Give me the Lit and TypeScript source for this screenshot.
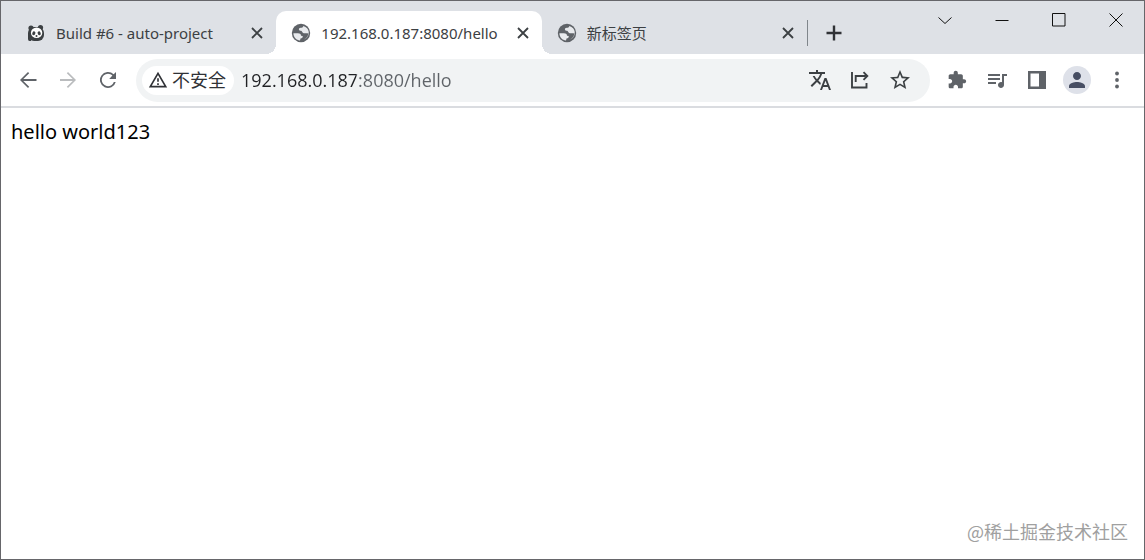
import { LitElement, html, css, svg } from "lit";
import { customElement } from "lit/decorators.js";
import { classMap } from "lit/directives/class-map.js";

const icon = (body: unknown, size = 24, box = 24) => html`<svg
  width=${size}
  height=${size}
  viewBox="0 0 ${box} ${box}"
  fill="currentColor"
  aria-hidden="true"
>${body}</svg>`;

const globe = icon(svg`<circle cx="10" cy="10" r="9.2" fill="#5f6368"/>
  <path fill="#e8eaed" d="M2.400 10.200h4.400c2.600 0 3.200 1 3.200 2.600l1.700.3c.3 1.500-.6 2.400-2.200 2.500l-.5 1.800C5.300 17.200 2.500 14.200 2.400 10.200z"/>
  <path fill="#e8eaed" d="M12.400 2.900c-.4 1.400-1.200 1.700-2.600 1.900-1.300.2-2 .7-1.900 1.600.1 1 1 1.200 2.200 1.300 1.200.2 1.100 2.300 2.600 2.500 1.700.2 2.800-.3 4.700.4-.4 3-2.100 5-4.600 6 5-1.500 6.500-7.600 3.300-11.300-1-1.200-2.200-2-3.700-2.400z"/>`, 20, 20);

const panda = icon(svg`<circle cx="4" cy="4" r="2.600"/><circle cx="13.500" cy="3.600" r="2.600"/>
  <rect x="1" y="3" width="16" height="14" rx="6"/>
  <path d="M1 9h3v8H2.500Q1 17 1 15z"/>
  <ellipse cx="9.600" cy="8.800" rx="5.700" ry="5.300" fill="#fff"/>
  <ellipse cx="6.800" cy="9.300" rx="1.500" ry="2" transform="rotate(25 6.800 9.300)"/>
  <ellipse cx="12.200" cy="9.300" rx="1.500" ry="2" transform="rotate(-25 12.200 9.300)"/>
  <circle cx="9.500" cy="12" r="1"/>`, 18, 18);

const cross = icon(svg`<path d="M1 1l10 10M11 1l-10 10" stroke="currentColor" stroke-width="1.800" fill="none"/>`, 12, 12);
const plus = icon(svg`<path d="M8 .5v15M.5 8h15" stroke="currentColor" stroke-width="2.400" fill="none"/>`, 16, 16);

const glyph = (d: string, size = 24) => icon(svg`<path d=${d}/>`, size);
const back = glyph("M20.500 11.100H7.300l5.900-5.900L12 4l-8 8 8 8 1.200-1.200-5.900-5.900h13.200z");
const forward = glyph("M4 11.100h12.700l-5.900-5.900L12 4l8 8-8 8-1.200-1.200 5.900-5.900H4z");
const reload = glyph("M17.650 6.350A8 8 0 1 0 19.730 14h-1.900A6.200 6.200 0 1 1 12 5.800c1.700 0 3.200.7 4.400 1.800L13.200 11H20V4z");
const warning = glyph("M12 2 1 21h22zm0 4 7.530 13H4.470zm-1 4v4h2v-4zm0 6v2h2v-2z", 20);
const translate = glyph("M12.870 15.070l-2.540-2.510.03-.03c1.740-1.940 2.980-4.170 3.710-6.530H17V4h-7V2H8v2H1v1.990h11.170C11.500 7.920 10.440 9.750 9 11.350 8.070 10.320 7.300 9.190 6.690 8h-2c.73 1.630 1.730 3.170 2.980 4.560l-5.090 5.020L4 19l5-5 3.110 3.110.76-2.040zM18.500 10h-2L12 22h2l1.120-3h4.750L21 22h2l-4.500-12zm-2.620 7 1.620-4.330L19.120 17h-3.240z");
const share = icon(svg`<path d="M4 4v15.500h14.500V15M7.700 14V8h10M15.500 4.200L19.300 8l-3.800 3.800" stroke="currentColor" stroke-width="1.900" fill="none"/>`, 24, 24);
const star = glyph("M22 9.240l-7.190-.62L12 2 9.190 8.630 2 9.240l5.460 4.730L5.820 21 12 17.270 18.180 21l-1.630-7.030L22 9.240zM12 15.400l-3.760 2.270 1-4.280-3.320-2.880 4.380-.38L12 6.100l1.710 4.040 4.380.38-3.320 2.880 1 4.280L12 15.400z");
const puzzle = glyph("M20.500 11H19V7c0-1.100-.9-2-2-2h-4V3.500C13 2.120 11.880 1 10.500 1S8 2.120 8 3.500V5H4c-1.100 0-1.990.9-1.990 2v3.800H3.500c1.490 0 2.700 1.210 2.700 2.700s-1.210 2.700-2.700 2.700H2V20c0 1.100.9 2 2 2h3.800v-1.500c0-1.490 1.210-2.700 2.700-2.700 1.490 0 2.700 1.210 2.700 2.700V22H17c1.100 0 2-.9 2-2v-4h1.500c1.380 0 2.500-1.120 2.500-2.500S21.880 11 20.500 11z", 20);
const queue = glyph("M15 6H3v2h12V6zm0 4H3v2h12v-2zM3 16h8v-2H3v2zM17 6v8.180c-.31-.11-.65-.18-1-.18-1.660 0-3 1.340-3 3s1.340 3 3 3 3-1.340 3-3V8h3V6h-5z");
const panel = icon(svg`<path fill-rule="evenodd" d="M1 1h18v18H1zM3.500 3.500v13H12v-13z"/>`, 20, 20);
const person = glyph("M12 12c2.210 0 4-1.790 4-4s-1.790-4-4-4-4 1.790-4 4 1.790 4 4 4zm0 2c-2.670 0-8 1.340-8 4v2h16v-2c0-2.660-5.330-4-8-4z");
const dots = icon(svg`<circle cx="12" cy="5.500" r="1.900"/><circle cx="12" cy="12" r="1.900"/><circle cx="12" cy="18.500" r="1.900"/>`);
const line = (d: string) => icon(svg`<path d=${d} stroke="currentColor" fill="none"/>`, 14, 14);

const tabs = [
  { title: "Build #6 - auto-project", mark: panda, active: false },
  { title: "192.168.0.187:8080/hello", mark: globe, active: true },
  { title: "新标签页", mark: globe, active: false },
];

@customElement("app-root")
export class AppRoot extends LitElement {
  static styles = css`
    :host {
      display: block;
      font-family: "Noto Sans", "Noto Sans CJK SC", sans-serif;
      color: #000;
    }
    * { box-sizing: border-box; }
    svg { display: block; flex: none; }
    button {
      display: grid;
      place-items: center;
      padding: 0;
      border: 0;
      background: none;
      color: inherit;
      font: inherit;
      flex: none;
    }
    .window {
      display: flex;
      flex-direction: column;
      min-height: 100vh;
      border: 1px solid #66666a;
      background: #fff;
    }
    .strip {
      display: flex;
      justify-content: space-between;
      height: 53px;
      background: #dee1e6;
      color: #3c4043;
    }
    .tabs {
      display: flex;
      flex: 0 1 860px;
      min-width: 0;
      padding: 10px 0 0 10px;
    }
    .tab {
      position: relative;
      display: flex;
      align-items: center;
      gap: 10px;
      flex: 0 1 266px;
      min-width: 0;
      padding: 0 12px 0 15px;
      border-radius: 10px 10px 0 0;
    }
    .active { background: #fff; }
    .active::before,
    .active::after {
      content: "";
      position: absolute;
      bottom: 0;
      width: 10px;
      height: 10px;
    }
    .active::before {
      right: 100%;
      background: radial-gradient(circle at 0 0, transparent 10px, #fff 10px);
    }
    .active::after {
      left: 100%;
      background: radial-gradient(circle at 100% 0, transparent 10px, #fff 10px);
    }
    .mark { display: grid; place-items: center; width: 20px; flex: none; }
    .title {
      flex: 1;
      min-width: 0;
      overflow: hidden;
      white-space: nowrap;
      font-size: 15px;
      line-height: 24px;
    }
    .close { width: 14px; height: 24px; }
    .new {
      align-self: center;
      width: 54px;
      height: 26px;
      border-left: 1px solid #80868b;
      color: #303236;
    }
    .controls { display: flex; color: #111; }
    .controls button { width: 57px; height: 37px; }
    .toolbar {
      display: flex;
      align-items: center;
      height: 54px;
      padding: 0 7px;
      border-bottom: 2px solid #dadce0;
      color: #5f6368;
    }
    .toolbar button { width: 40px; height: 40px; }
    .toolbar .off { color: #babcbe; }
    .omnibox {
      display: flex;
      align-items: center;
      flex: 1;
      min-width: 0;
      height: 43px;
      margin: 0 7px 0 8px;
      padding: 0 10px 0 6px;
      border-radius: 22px;
      background: #f1f3f4;
      color: #3c4043;
    }
    .toolbar .chip {
      display: flex;
      align-items: center;
      gap: 4px;
      width: auto;
      height: 29px;
      padding: 0 8px 0 6px;
      border-radius: 15px;
      background: #fff;
      color: #303236;
      font-size: 18px;
      line-height: 28px;
    }
    .url {
      flex: 1;
      min-width: 0;
      padding: 0;
      margin-left: 7px;
      border: 0;
      outline: 0;
      font: 18px/28px "Open Sans", sans-serif;
      color: transparent;
      background: linear-gradient(90deg, #202124 115px, #5f6368 115px);
      -webkit-background-clip: text;
      background-clip: text;
    }
    .avatar {
      display: grid;
      place-items: center;
      width: 28px;
      height: 28px;
      border-radius: 50%;
      background: #dee1e9;
      color: #474e63;
    }
    .page {
      display: flex;
      flex-direction: column;
      justify-content: space-between;
      flex: 1;
      padding: 10px;
    }
    .hello { margin: 0; font-size: 20px; line-height: 28px; }
    .watermark {
      margin: 0;
      padding: 0 6px 4px 0;
      text-align: right;
      font: 18px/28px "Noto Sans CJK SC", sans-serif;
      color: #a0a0a0;
    }
  `;

  render() {
    return html`<div class="window">
      <header class="strip">
        <div class="tabs" role="tablist">
          ${tabs.map((t) => html`<div
            class=${classMap({ tab: true, active: t.active })}
            role="tab"
            aria-selected=${t.active}
          ><span class="mark">${t.mark}</span><span class="title">${t.title}</span
            ><button class="close" aria-label="关闭">${cross}</button></div>`)}
          <button class="new" aria-label="打开新的标签页">${plus}</button>
        </div>
        <div class="controls">
          <button aria-label="搜索标签页">${line("M.5 4.500l6.500 6 6.500-6")}</button>
          <button aria-label="最小化">${line("M.5 7.500h13")}</button>
          <button aria-label="最大化">${line("M.5 .5h12.500v12.500h-12.500z")}</button>
          <button aria-label="关闭窗口">${line("M.5 .5l13 13M13.500 .5l-13 13")}</button>
        </div>
      </header>
      <nav class="toolbar">
        <button aria-label="后退">${back}</button>
        <button class="off" aria-label="前进">${forward}</button>
        <button aria-label="重新加载">${reload}</button>
        <div class="omnibox">
          <button class="chip">${warning}<span>不安全</span></button>
          <input class="url" type="text" aria-label="地址" .value=${"192.168.0.187:8080/hello"} />
          <button aria-label="翻译">${translate}</button>
          <button aria-label="分享">${share}</button>
          <button aria-label="收藏">${star}</button>
        </div>
        <button aria-label="扩展程序">${puzzle}</button>
        <button aria-label="媒体控件">${queue}</button>
        <button aria-label="侧边栏">${panel}</button>
        <button aria-label="用户"><span class="avatar">${person}</span></button>
        <button aria-label="菜单">${dots}</button>
      </nav>
      <main class="page">
        <p class="hello">hello world123</p>
        <p class="watermark">@稀土掘金技术社区</p>
      </main>
    </div>`;
  }
}
